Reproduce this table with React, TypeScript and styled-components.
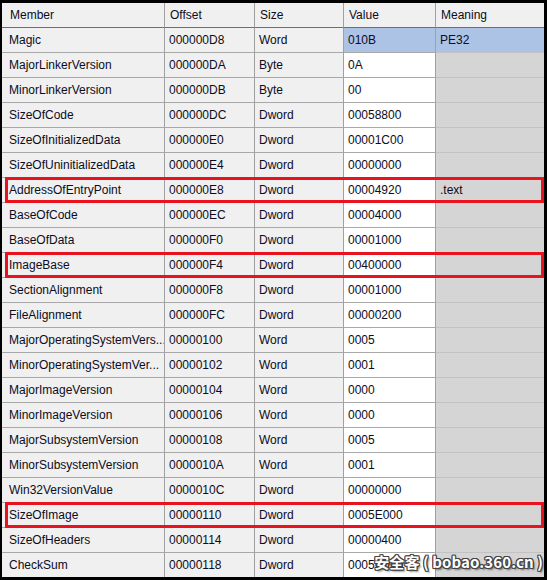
import React from "react";
import styled, { createGlobalStyle, css } from "styled-components";

const Global = createGlobalStyle`
  html, body { margin: 0; padding: 0; background: #000; }
  body { font-family: "Liberation Sans", Arial, sans-serif; }
`;

type Col = "member" | "offset" | "size" | "value" | "meaning";

const rows: [string, string, string, string, string][] = [
  ["Magic", "000000D8", "Word", "010B", "PE32"],
  ["MajorLinkerVersion", "000000DA", "Byte", "0A", ""],
  ["MinorLinkerVersion", "000000DB", "Byte", "00", ""],
  ["SizeOfCode", "000000DC", "Dword", "00058800", ""],
  ["SizeOfInitializedData", "000000E0", "Dword", "00001C00", ""],
  ["SizeOfUninitializedData", "000000E4", "Dword", "00000000", ""],
  ["AddressOfEntryPoint", "000000E8", "Dword", "00004920", ".text"],
  ["BaseOfCode", "000000EC", "Dword", "00004000", ""],
  ["BaseOfData", "000000F0", "Dword", "00001000", ""],
  ["ImageBase", "000000F4", "Dword", "00400000", ""],
  ["SectionAlignment", "000000F8", "Dword", "00001000", ""],
  ["FileAlignment", "000000FC", "Dword", "00000200", ""],
  ["MajorOperatingSystemVers...", "00000100", "Word", "0005", ""],
  ["MinorOperatingSystemVer...", "00000102", "Word", "0001", ""],
  ["MajorImageVersion", "00000104", "Word", "0000", ""],
  ["MinorImageVersion", "00000106", "Word", "0000", ""],
  ["MajorSubsystemVersion", "00000108", "Word", "0005", ""],
  ["MinorSubsystemVersion", "0000010A", "Word", "0001", ""],
  ["Win32VersionValue", "0000010C", "Dword", "00000000", ""],
  ["SizeOfImage", "00000110", "Dword", "0005E000", ""],
  ["SizeOfHeaders", "00000114", "Dword", "00000400", ""],
  ["CheckSum", "00000118", "Dword", "0005C000", ""],
];

const highlighted = new Set([6, 9, 19]);
const cols: Col[] = ["member", "offset", "size", "value", "meaning"];

const Frame = styled.div`
  position: relative;
  width: 547px;
  height: 580px;
  box-sizing: border-box;
  border-style: solid;
  border-color: #000;
  border-width: 3px 3px 3px 2px;
  background: #f0f0f0;
  overflow: hidden;
`;

const GridRow = styled.div<{ $last?: boolean }>`
  position: relative;
  display: grid;
  grid-template-columns: 163px 90px 89px 92px 108px;
  height: ${(p) => (p.$last ? 24 : 25)}px;
`;

const HeaderCell = styled.div<{ $first?: boolean }>`
  box-sizing: border-box;
  display: flex;
  align-items: center;
  padding-left: ${(p) => (p.$first ? 8 : 5)}px;
  background: #f0f0f0;
  border-right: 1px solid #a0a0a0;
  border-bottom: 1px solid #6e6e6e;
  font-size: 12px;
  color: #0c0c1c;
  white-space: nowrap;
  &:last-child { border-right: none; }
`;

const bgFor = (col: Col, selected: boolean) => {
  if (selected && (col === "value" || col === "meaning")) return "#adc3e6";
  if (col === "value") return "#ffffff";
  if (col === "meaning") return "#d5d5d5";
  return "#f0f0f0";
};

const Cell = styled.div<{ $col: Col; $selected: boolean; $last: boolean }>`
  box-sizing: border-box;
  display: flex;
  align-items: center;
  padding-left: ${(p) => (p.$col === "member" ? 7 : 4)}px;
  background: ${(p) => bgFor(p.$col, p.$selected)};
  border-right: 1px solid #a0a0a0;
  ${(p) =>
    !p.$last &&
    css`
      border-bottom: 1px solid ${p.$col === "meaning" ? "#c2c2c2" : "#a8a8a8"};
    `}
  font-size: 12px;
  color: #0c0c1c;
  white-space: nowrap;
  overflow: hidden;
  &:last-child { border-right: none; }
`;

const Highlight = styled.div`
  position: absolute;
  top: -1px;
  left: 3px;
  right: 0;
  height: 26px;
  box-sizing: border-box;
  border: 3px solid #e8131f;
  pointer-events: none;
`;

const Watermark = styled.div`
  position: absolute;
  right: 1px;
  bottom: 6px;
  font-family: "Noto Sans CJK SC", "Liberation Sans", sans-serif;
  font-weight: 700;
  font-size: 15px;
  line-height: 18px;
  color: #ffffff;
  letter-spacing: 0.1px;
  white-space: pre;
  text-shadow:
    1px 1px 0 #444, -1px -1px 0 #444, 1px -1px 0 #444, -1px 1px 0 #444,
    0 1px 0 #444, 0 -1px 0 #444, 1px 0 0 #444, -1px 0 0 #444,
    2px 2px 2px rgba(0, 0, 0, 0.5);
`;

export default function App() {
  return (
    <>
      <Global />
      <Frame>
        <GridRow>
          {["Member", "Offset", "Size", "Value", "Meaning"].map((h, i) => (
            <HeaderCell key={h} $first={i === 0}>
              {h}
            </HeaderCell>
          ))}
        </GridRow>
        {rows.map((r, ri) => {
          const last = ri === rows.length - 1;
          return (
            <GridRow key={ri} $last={last}>
              {r.map((v, ci) => (
                <Cell key={ci} $col={cols[ci]} $selected={ri === 0} $last={last}>
                  {v}
                </Cell>
              ))}
              {highlighted.has(ri) && <Highlight />}
            </GridRow>
          );
        })}
        <Watermark>{"安全客 ( bobao.360.cn )"}</Watermark>
      </Frame>
    </>
  );
}
